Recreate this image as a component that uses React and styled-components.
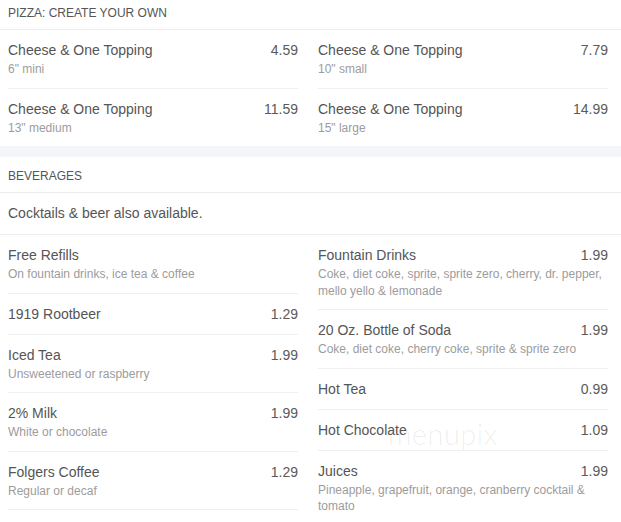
import React from "react";
import styled, { createGlobalStyle } from "styled-components";

const GlobalStyle = createGlobalStyle`
  html, body {
    margin: 0;
    padding: 0;
    background: #fff;
  }
  body {
    font-family: "Liberation Sans", Arial, sans-serif;
    color: #555;
    overflow: hidden;
  }
`;

const pizza = [
  [
    { name: "Cheese & One Topping", price: "4.59", desc: "6\" mini" },
    { name: "Cheese & One Topping", price: "11.59", desc: "13\" medium" },
  ],
  [
    { name: "Cheese & One Topping", price: "7.79", desc: "10\" small" },
    { name: "Cheese & One Topping", price: "14.99", desc: "15\" large" },
  ],
];

const beverages = [
  [
    { name: "Free Refills", desc: "On fountain drinks, ice tea & coffee" },
    { name: "1919 Rootbeer", price: "1.29" },
    { name: "Iced Tea", price: "1.99", desc: "Unsweetened or raspberry" },
    { name: "2% Milk", price: "1.99", desc: "White or chocolate" },
    { name: "Folgers Coffee", price: "1.29", desc: "Regular or decaf" },
  ],
  [
    {
      name: "Fountain Drinks",
      price: "1.99",
      desc: "Coke, diet coke, sprite, sprite zero, cherry, dr. pepper, mello yello & lemonade",
    },
    {
      name: "20 Oz. Bottle of Soda",
      price: "1.99",
      desc: "Coke, diet coke, cherry coke, sprite & sprite zero",
    },
    { name: "Hot Tea", price: "0.99" },
    { name: "Hot Chocolate", price: "1.09" },
    {
      name: "Juices",
      price: "1.99",
      desc: "Pineapple, grapefruit, orange, cranberry cocktail & tomato",
    },
  ],
];

export default function App() {
  return (
    <Page>
      <GlobalStyle />
      <Section>
        <SectionHeader>Pizza: Create Your Own</SectionHeader>
        <Columns>
          {pizza.map((col, i) => (
            <Column key={i}>
              {col.map((item, j) => (
                <Item key={j} {...item} />
              ))}
            </Column>
          ))}
        </Columns>
      </Section>
      <Gap />
      <Section>
        <SectionHeader>Beverages</SectionHeader>
        <Note>Cocktails &amp; beer also available.</Note>
        <Columns>
          {beverages.map((col, i) => (
            <Column key={i} $trailing>
              {col.map((item, j) => (
                <Item key={j} {...item} />
              ))}
            </Column>
          ))}
        </Columns>
      </Section>
      <Watermark>menupix</Watermark>
    </Page>
  );
}

function Item({ name, price, desc }) {
  return (
    <Row>
      <Top>
        <Name>{name}</Name>
        {price && <Price>{price}</Price>}
      </Top>
      {desc && <Desc>{desc}</Desc>}
    </Row>
  );
}

const Page = styled.div`
  position: relative;
  width: 621px;
  margin-top: -6px;
`;

const Section = styled.section`
  background: #fff;
`;

const SectionHeader = styled.div`
  padding: 11px 8px 8px;
  line-height: 16px;
  font-size: 12px;
  text-transform: uppercase;
  color: #555;
  border-bottom: 1px solid #ececec;
`;

const Note = styled.div`
  padding: 10px 8px 11px;
  font-size: 14px;
  line-height: 20px;
  color: #555;
  border-bottom: 1px solid #ececec;
`;

const Columns = styled.div`
  display: grid;
  grid-template-columns: 290px 290px;
  column-gap: 20px;
  padding: 0 13px 0 8px;
  align-items: start;
`;

const Column = styled.div`
  display: flex;
  flex-direction: column;

  & > div:last-child {
    border-bottom: ${(p) => (p.$trailing ? "1px solid #efefef" : "none")};
  }
`;

const Row = styled.div`
  padding: 10px 0;
  border-bottom: 1px solid #efefef;
`;

const Top = styled.div`
  display: flex;
  justify-content: space-between;
  align-items: baseline;
  font-size: 14px;
  line-height: 20px;
  color: #555;
`;

const Name = styled.span``;

const Price = styled.span`
  color: #5a5a5a;
`;

const Desc = styled.div`
  margin-top: 1px;
  font-size: 12px;
  line-height: 16.5px;
  color: #9c9c9c;
`;

const Gap = styled.div`
  height: 11px;
  background: #f4f5f8;
`;

const Watermark = styled.div`
  position: absolute;
  left: 388px;
  top: 422px;
  font-family: "Lato", "DejaVu Sans", sans-serif;
  font-weight: 300;
  font-size: 29px;
  letter-spacing: 0.5px;
  color: rgba(0, 0, 0, 0.08);
  pointer-events: none;
`;
